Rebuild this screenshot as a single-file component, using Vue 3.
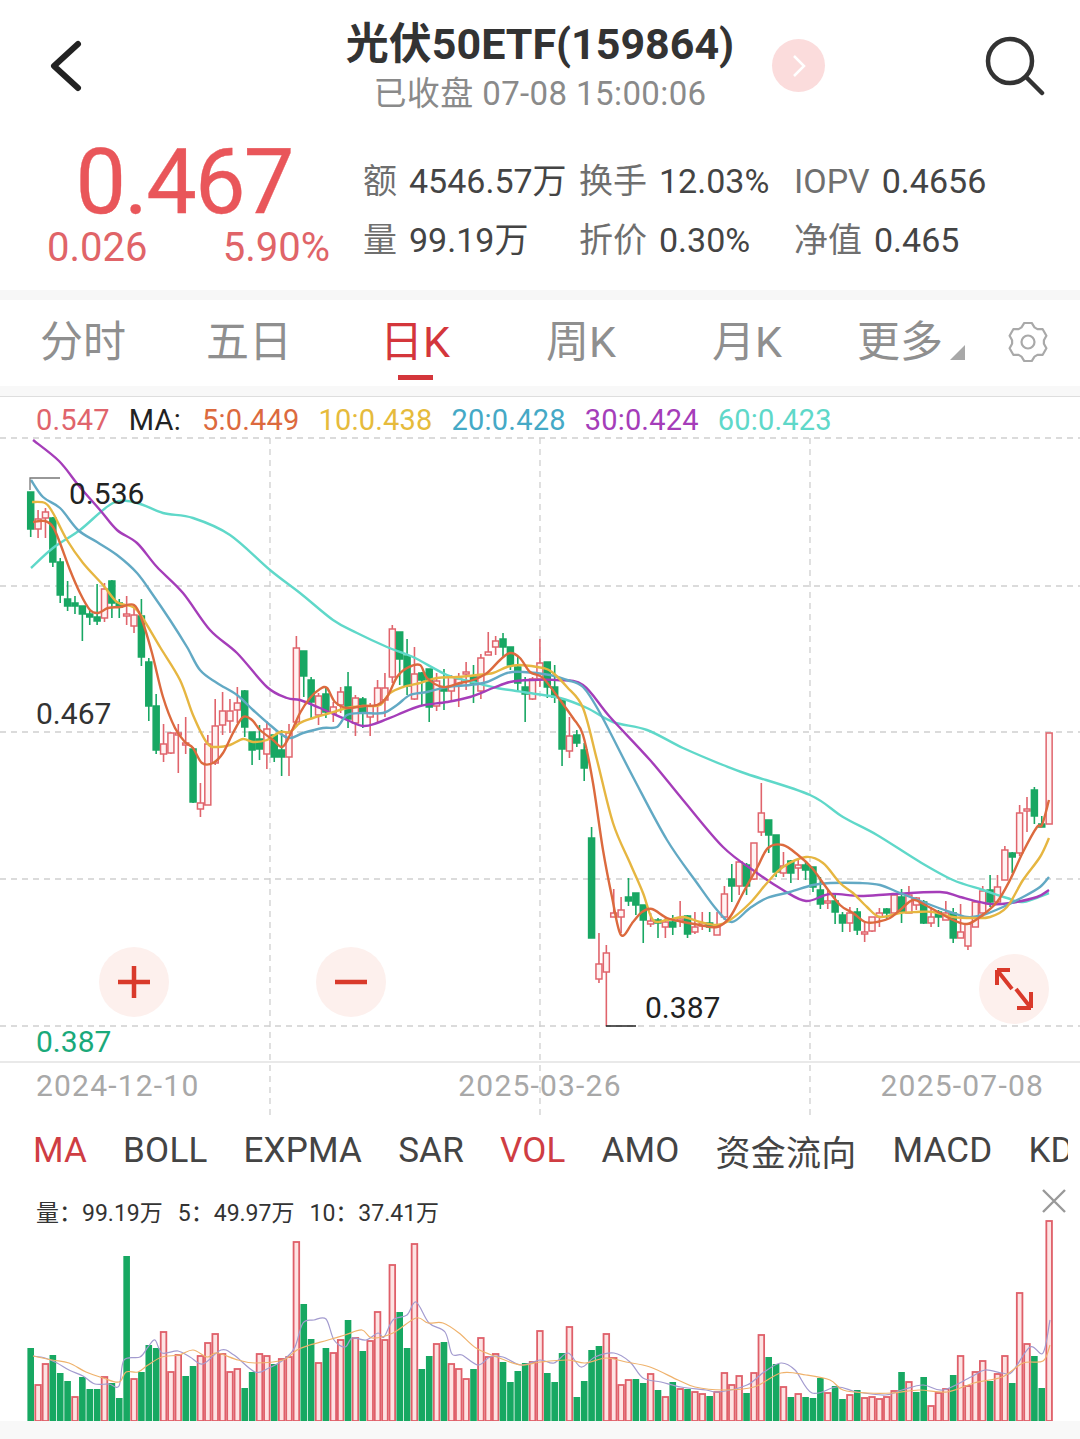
<script setup>
// 行情数据,坐标直接用页面像素:[涨跌, 最高, 实体上沿, 实体下沿, 最低]
const candleRows = [
  ['g',492,492,529,537],['r',510,519,529,538],['r',508,512,518,538],['g',517,518,562,567],['g',558,562,595,603],
  ['g',581,599,606,611],['g',596,603,606,614],['g',606,606,614,641],['g',609,614,617,625],['g',584,617,621,625],
  ['r',583,589,618,622],['g',580,581,603,618],['g',599,603,607,618],['r',596,614,615,625],['r',605,615,626,633],
  ['g',599,616,657,666],['g',658,662,706,721],['g',694,706,750,754],['r',724,744,754,762],['r',732,733,753,754],
  ['r',724,733,734,773],['r',717,743,745,754],['g',747,749,802,803],['r',783,803,809,817],['r',735,744,805,805],
  ['r',699,726,763,765],['r',692,711,725,735],['r',699,711,721,733],['r',687,703,710,723],['g',690,691,727,737],
  ['g',732,732,750,765],['g',725,739,749,760],['r',721,729,754,769],['g',735,735,757,762],['g',730,750,757,776],
  ['r',724,733,757,776],['r',636,648,722,727],['g',651,651,676,697],['g',677,680,702,718],['r',693,696,715,725],
  ['g',688,694,712,718],['r',702,707,713,722],['r',687,692,705,713],['g',672,687,719,728],['r',695,698,723,736],
  ['g',697,699,713,728],['r',703,706,717,736],['r',680,688,705,722],['r',673,688,700,717],['r',625,629,677,683],
  ['g',632,632,659,685],['g',639,656,686,695],['r',647,674,699,700],['g',672,673,680,705],['g',669,669,707,722],
  ['r',673,681,706,711],['g',669,687,691,710],['r',675,677,691,702],['r',673,679,684,707],['r',662,672,673,690],
  ['g',665,677,683,703],['r',654,658,691,699],['r',632,652,655,655],['r',636,641,647,655],['g',633,639,647,657],
  ['g',647,647,665,670],['g',657,667,683,692],['g',677,687,694,722],['r',677,679,699,700],['r',639,663,679,687],
  ['g',662,662,687,698],['g',665,687,697,703],['g',698,700,749,766],['r',717,736,751,758],['g',730,735,743,747],
  ['g',743,750,768,781],['g',827,838,938,938],['r',933,964,979,983],['r',945,953,972,1026],['r',889,913,917,917],
  ['r',897,910,917,933],['g',878,897,901,906],['g',893,893,905,915],['g',905,905,920,943],['r',913,921,924,927],
  ['g',918,920,923,938],['r',917,922,927,938],['g',915,922,927,935],['r',901,919,921,927],['g',915,916,934,938],
  ['r',912,927,932,934],['r',912,923,926,930],['g',912,923,927,932],['r',912,927,935,935],['r',886,894,917,920],
  ['g',864,879,886,902],['r',861,862,886,895],['g',863,865,886,895],['r',843,843,879,880],['r',783,813,832,836],
  ['g',820,820,835,853],['g',835,835,872,877],['r',852,866,873,877],['g',860,861,873,883],['r',860,865,868,880],
  ['g',862,865,870,880],['g',867,867,887,892],['g',877,890,904,909],['r',890,901,903,909],['g',893,901,912,924],
  ['g',912,915,923,932],['r',907,913,923,932],['g',908,912,930,935],['r',922,932,933,942],['r',917,917,931,932],
  ['r',908,913,917,927],['g',908,909,913,920],['r',893,895,913,915],['g',889,897,912,923],['r',886,895,913,913],
  ['r',897,898,905,910],['g',900,902,923,924],['r',907,917,923,927],['g',910,912,917,927],['r',901,913,920,920],
  ['g',908,913,938,943],['r',904,932,938,938],['r',923,924,946,950],['r',900,902,927,927],['r',886,891,913,917],
  ['g',875,890,902,907],['r',875,887,902,903],['r',846,850,880,880],['g',852,853,857,873],['r',805,813,853,856],
  ['r',797,809,811,832],['g',787,790,816,824],['g',816,824,827,827],['r',733,733,824,824]
]

// 成交量柱顶部 y,负数为绿柱
const volumeTops = [
  -1348,1385,1364,-1355,-1373,-1381,1397,-1377,-1389,-1389,1377,-1383,-1398,-1256,1379,-1372,-1345,-1348,1332,1372,
  1355,-1376,-1366,1356,1343,1334,1354,1372,1369,-1388,-1372,1354,1356,-1364,1359,1357,1242,-1304,-1339,1363,
  -1348,1353,1340,-1320,1338,-1351,1341,1312,1340,1265,-1312,-1348,1244,-1369,-1356,1344,-1342,1364,1369,1379,
  -1369,1338,1357,1354,-1362,-1382,-1371,-1363,1362,1331,-1373,-1382,-1353,1327,-1397,-1381,-1350,-1346,1334,1358,
  1385,1380,-1379,-1383,1374,-1390,1397,-1382,1389,-1389,1392,1394,-1396,1392,1373,1385,1376,-1393,1373,1335,
  -1357,-1364,1387,-1397,1394,-1397,-1398,-1378,1393,-1386,-1399,1395,-1390,1398,1397,1399,1397,1391,-1372,1382,
  -1392,-1377,1406,1393,1389,-1375,1356,1386,1372,1361,-1381,1374,1356,-1383,1293,1344,-1356,-1388,1221
]

const stepX = 7.38
const barX = (i) => 30.7 + stepX * i

const candles = candleRows.map(([kind, high, top, bottom, low], i) => ({
  kind, high, top, bottom, low, x: barX(i)
}))

const volumes = volumeTops.map((v, i) => ({
  kind: v < 0 ? 'g' : 'r',
  y: Math.abs(v),
  h: 1421 - Math.abs(v),
  x: barX(i)
}))

// 把折线点转成平滑曲线
const smooth = (pts) => {
  let d = `M${pts[0][0]} ${pts[0][1]}`
  for (let i = 0; i < pts.length - 1; i++) {
    const p0 = pts[i - 1] || pts[i]
    const p1 = pts[i]
    const p2 = pts[i + 1]
    const p3 = pts[i + 2] || p2
    const c1x = p1[0] + (p2[0] - p0[0]) / 6
    const c1y = p1[1] + (p2[1] - p0[1]) / 6
    const c2x = p2[0] - (p3[0] - p1[0]) / 6
    const c2y = p2[1] - (p3[1] - p1[1]) / 6
    d += ` C${c1x.toFixed(1)} ${c1y.toFixed(1)} ${c2x.toFixed(1)} ${c2y.toFixed(1)} ${p2[0]} ${p2[1]}`
  }
  return d
}

const maLines = [
  { color: '#5fd8c9', pts: [[31,568],[53,548],[80,530],[113,503],[137,503],[163,513],[193,518],[230,535],[270,570],[300,593],[333,620],[357,633],[387,647],[413,657],[447,675],[473,682],[497,688],[530,693],[560,698],[587,708],[613,722],[647,730],[683,748],[723,765],[747,774],[810,795],[843,817],[877,835],[920,862],[953,880],[983,890],[1007,898],[1023,902],[1049,893]] },
  { color: '#a53db9', pts: [[33,440],[59,461],[79,486],[100,510],[117,530],[137,543],[157,567],[183,593],[210,630],[237,653],[267,687],[287,698],[300,700],[320,708],[347,720],[363,726],[377,723],[397,715],[420,706],[447,702],[470,697],[493,688],[510,682],[530,680],[557,680],[583,685],[610,717],[650,760],[683,800],[723,847],[757,873],[783,890],[806,901],[830,894],[860,896],[893,894],[940,892],[960,897],[990,904],[1010,903],[1037,897],[1049,890]] },
  { color: '#62a9c4', pts: [[31,480],[43,497],[60,508],[78,530],[97,542],[117,555],[137,573],[153,595],[170,620],[187,647],[200,670],[217,683],[237,695],[253,710],[270,725],[288,738],[303,733],[323,728],[337,727],[347,715],[363,713],[383,713],[397,705],[410,695],[427,692],[447,687],[470,685],[487,682],[507,673],[523,672],[550,675],[567,680],[583,687],[600,713],[633,777],[667,840],[697,883],[717,910],[732,922],[750,908],[767,898],[790,892],[813,885],[830,883],[860,883],[880,885],[900,893],[923,902],[950,912],[967,917],[983,915],[1003,907],[1023,897],[1040,887],[1049,877]] },
  { color: '#e6b641', pts: [[32,502],[45,503],[53,513],[67,540],[83,563],[103,585],[117,602],[133,607],[142,617],[160,647],[180,680],[193,715],[207,743],[217,747],[230,745],[243,739],[253,742],[267,740],[280,732],[290,732],[300,723],[313,718],[330,713],[347,708],[363,706],[380,705],[390,693],[403,687],[420,683],[437,678],[457,677],[477,675],[493,673],[507,667],[520,665],[543,668],[552,672],[567,687],[583,708],[597,760],[613,823],[630,863],[643,893],[653,920],[667,920],[683,917],[700,922],[717,925],[730,920],[750,903],[767,883],[783,867],[806,857],[823,863],[840,883],[853,893],[867,907],[880,917],[900,913],[917,912],[933,912],[953,917],[973,918],[990,917],[1007,907],[1023,880],[1040,857],[1049,838]] },
  { color: '#dc6a3e', pts: [[33,522],[45,521],[53,527],[60,543],[70,570],[80,593],[90,610],[98,613],[108,608],[120,607],[134,605],[142,620],[152,653],[163,697],[175,728],[185,742],[193,748],[202,763],[213,763],[223,753],[233,733],[243,717],[252,720],[260,730],[273,740],[282,747],[289,737],[300,713],[310,698],[320,689],[327,688],[335,702],[347,708],[363,706],[377,705],[387,697],[397,677],[407,668],[420,665],[427,678],[443,687],[460,683],[473,680],[487,673],[500,660],[510,653],[520,658],[530,672],[543,678],[560,700],[573,718],[583,735],[593,783],[603,850],[612,897],[621,935],[633,922],[642,912],[652,909],[667,918],[683,922],[700,925],[717,927],[730,917],[743,893],[757,868],[768,848],[783,845],[798,855],[812,868],[823,883],[840,905],[853,913],[865,922],[877,922],[890,918],[900,910],[913,900],[925,905],[940,913],[953,920],[967,924],[980,917],[997,902],[1010,880],[1023,852],[1037,827],[1042,825],[1049,800]] }
].map((line) => ({ color: line.color, d: smooth(line.pts) }))

const volumeLines = [
  { color: '#a39bcf', d: smooth([[33,1356],[45,1358],[57,1363],[69,1370],[83,1376],[95,1384],[109,1384],[119,1386],[124,1360],[140,1357],[148,1347],[155,1340],[162,1353],[178,1351],[190,1357],[203,1364],[221,1350],[234,1355],[255,1372],[269,1368],[286,1358],[295,1347],[303,1323],[314,1320],[326,1319],[334,1340],[345,1347],[352,1338],[366,1340],[378,1333],[384,1337],[393,1320],[407,1315],[416,1302],[429,1323],[445,1332],[452,1354],[462,1355],[478,1365],[490,1357],[503,1357],[521,1365],[540,1360],[554,1363],[568,1353],[581,1367],[595,1357],[614,1353],[630,1362],[643,1378],[661,1382],[681,1387],[706,1390],[719,1392],[747,1385],[764,1372],[781,1363],[795,1370],[812,1393],[837,1387],[857,1392],[885,1395],[902,1390],[923,1385],[943,1390],[971,1377],[985,1370],[1002,1373],[1012,1372],[1030,1347],[1043,1353],[1050,1320]]) },
  { color: '#efb26c', d: smooth([[33,1356],[52,1360],[69,1363],[86,1372],[103,1378],[119,1382],[126,1372],[138,1372],[148,1365],[162,1357],[179,1355],[193,1350],[207,1357],[217,1353],[238,1360],[255,1363],[283,1360],[297,1350],[310,1345],[328,1340],[345,1335],[362,1330],[372,1338],[393,1333],[416,1318],[428,1323],[443,1323],[459,1333],[476,1348],[497,1357],[521,1365],[540,1362],[568,1360],[585,1363],[606,1358],[626,1362],[650,1367],[678,1380],[695,1387],[723,1390],[754,1387],[781,1373],[806,1375],[830,1380],[843,1390],[868,1393],[892,1393],[919,1390],[947,1392],[974,1383],[1002,1377],[1023,1363],[1043,1361],[1050,1345]]) }
]

// 六齿设置图标
const gearPath = (() => {
  const pts = []
  for (let k = 0; k < 6; k++) {
    const a = (k * 60 - 90) * Math.PI / 180
    for (const [off, r] of [[-24, 16], [-11, 19.5], [11, 19.5], [24, 16]]) {
      const t = a + off * Math.PI / 180
      pts.push(`${(20 + r * Math.cos(t)).toFixed(1)},${(20 + r * Math.sin(t)).toFixed(1)}`)
    }
  }
  return pts.join(' ')
})()

const stats = [
  ['额', '4546.57万'], ['换手', '12.03%'], ['IOPV', '0.4656'],
  ['量', '99.19万'], ['折价', '0.30%'], ['净值', '0.465']
]
const periods = ['分时', '五日', '日K', '周K', '月K', '更多']
const maLegend = [
  { text: '5:0.449', color: '#dc6a3e' },
  { text: '10:0.438', color: '#e6bb3c' },
  { text: '20:0.428', color: '#45a9c6' },
  { text: '30:0.424', color: '#a53db9' },
  { text: '60:0.423', color: '#5fd8c9' }
]
const indicators = ['MA', 'BOLL', 'EXPMA', 'SAR', 'VOL', 'AMO', '资金流向', 'MACD', 'KDJ']
const activeIndicators = ['MA', 'VOL']
// 全角冒号
const volumeLegend = ['量\uFF1A99.19万', '5\uFF1A49.97万', '10\uFF1A37.41万']
</script>

<template>
  <div class="page">
    <header class="top-bar">
      <svg class="back-icon" width="36" height="54" viewBox="0 0 36 54">
        <polyline points="31,5 7,27 31,49" />
      </svg>
      <div class="title-box">
        <div class="title">光伏50ETF(159864)</div>
        <div class="status">已收盘 07-08 15:00:06</div>
      </div>
      <div class="top-right">
        <div class="next-btn">
          <svg width="16" height="26" viewBox="0 0 16 26"><polyline points="3,3 13,13 3,23" /></svg>
        </div>
        <svg class="search-icon" width="62" height="62" viewBox="0 0 62 62">
          <circle cx="27" cy="26" r="22" />
          <line x1="43" y1="42" x2="59" y2="58" />
        </svg>
      </div>
    </header>

    <section class="quote">
      <div class="price-box">
        <div class="price">0.467</div>
        <div class="change">
          <span>0.026</span>
          <span>5.90%</span>
        </div>
      </div>
      <div class="stats">
        <div v-for="item in stats" :key="item[0]" class="stat">
          <span class="stat-label">{{ item[0] }}</span>
          <span class="stat-value">{{ item[1] }}</span>
        </div>
      </div>
    </section>

    <div class="band"></div>

    <nav class="periods">
      <div
        v-for="name in periods"
        :key="name"
        class="period"
        :class="{ active: name === '日K', more: name === '更多' }"
      >
        {{ name }}
      </div>
      <svg class="gear" width="40" height="40" viewBox="0 0 40 40">
        <polygon :points="gearPath" />
        <circle cx="20" cy="20" r="6.5" />
      </svg>
    </nav>

    <div class="band band-low"></div>

    <section class="chart">
      <svg class="chart-svg" width="1080" height="719" viewBox="0 396 1080 719">
        <g class="grid">
          <line x1="0" y1="438" x2="1080" y2="438" />
          <line x1="0" y1="586" x2="1080" y2="586" />
          <line x1="0" y1="732" x2="1080" y2="732" />
          <line x1="0" y1="879" x2="1080" y2="879" />
          <line x1="0" y1="1026" x2="1080" y2="1026" />
          <line x1="270" y1="438" x2="270" y2="1115" />
          <line x1="540" y1="438" x2="540" y2="1115" />
          <line x1="810" y1="438" x2="810" y2="1115" />
        </g>
        <g v-for="(c, i) in candles" :key="i" :class="c.kind === 'g' ? 'down' : 'up'">
          <line class="wick" :x1="c.x" :x2="c.x" :y1="c.high" :y2="c.low" />
          <rect class="body" :x="c.x - 3" :y="c.top" width="6" :height="Math.max(c.bottom - c.top, 2)" />
        </g>
        <path v-for="line in maLines" :key="line.color" class="ma" :d="line.d" :stroke="line.color" />
        <polyline class="mark" points="30,490 30,478 60,478" />
        <line class="mark-dark" x1="606" y1="1026" x2="636" y2="1026" />
        <text class="label" x="69" y="504">0.536</text>
        <text class="label dim" x="36" y="724">0.467</text>
        <text class="label" x="645" y="1018">0.387</text>
        <text class="label low" x="36" y="1052">0.387</text>
      </svg>

      <div class="legend">
        <span class="legend-high">0.547</span>
        <span class="legend-ma">MA:</span>
        <span v-for="item in maLegend" :key="item.text" :style="{ color: item.color }">{{ item.text }}</span>
      </div>

      <div class="dates">
        <span>2024-12-10</span>
        <span>2025-03-26</span>
        <span>2025-07-08</span>
      </div>

      <button class="zoom-btn plus">
        <svg width="36" height="36" viewBox="0 0 36 36"><path d="M2 18h32M18 2v32" /></svg>
      </button>
      <button class="zoom-btn minus">
        <svg width="36" height="36" viewBox="0 0 36 36"><path d="M2 18h32" /></svg>
      </button>
      <button class="zoom-btn expand">
        <svg width="38" height="42" viewBox="0 0 38 42">
          <path d="M2 2h13M2 2v15M2 2l15 19M36 40H22M36 40V24M36 40L21 21" />
        </svg>
      </button>
    </section>

    <nav class="indicators">
      <span
        v-for="name in indicators"
        :key="name"
        :class="{ on: activeIndicators.includes(name) }"
      >{{ name }}</span>
    </nav>

    <section class="volume">
      <div class="volume-legend">
        <span v-for="text in volumeLegend" :key="text">{{ text }}</span>
      </div>
      <svg class="close-icon" width="26" height="26" viewBox="0 0 26 26">
        <path d="M2 2l22 22M24 2L2 24" />
      </svg>
      <svg class="volume-svg" width="1080" height="231" viewBox="0 1190 1080 231">
        <rect
          v-for="(v, i) in volumes"
          :key="i"
          :class="v.kind === 'g' ? 'bar-down' : 'bar-up'"
          :x="v.kind === 'g' ? v.x - 3.3 : v.x - 2.8"
          :y="v.y"
          :width="v.kind === 'g' ? 6.6 : 5.6"
          :height="v.h"
        />
        <path v-for="line in volumeLines" :key="line.color" class="vol-ma" :d="line.d" :stroke="line.color" />
      </svg>
    </section>

    <div class="foot"></div>
  </div>
</template>

<style scoped>
.page {
  width: 1080px;
  height: 1439px;
  overflow: hidden;
  background: #fff;
  font-family: Roboto, "Noto Sans CJK SC", sans-serif;
  color: #333;
}

/* 顶部栏 */
.top-bar {
  height: 125px;
  display: grid;
  grid-template-columns: 308px 464px 308px;
  align-items: center;
}

.back-icon {
  margin-left: 47px;
  margin-top: 6px;
}

.back-icon polyline {
  fill: none;
  stroke: #222;
  stroke-width: 6;
  stroke-linecap: round;
  stroke-linejoin: round;
}

.title-box {
  text-align: center;
  margin-top: 10px;
}

.title {
  font-size: 43px;
  font-weight: 700;
  line-height: 50px;
  color: #333;
  white-space: nowrap;
}

.status {
  font-size: 33px;
  line-height: 44px;
  margin-top: 3px;
  color: #8a8a8a;
  white-space: nowrap;
  letter-spacing: 0.4px;
}

.top-right {
  display: flex;
  align-items: center;
  justify-content: space-between;
  padding-right: 35px;
  margin-top: 6px;
}

.next-btn {
  width: 53px;
  height: 53px;
  border-radius: 50%;
  background: #fbdcdc;
  display: flex;
  align-items: center;
  justify-content: center;
}

.next-btn polyline {
  fill: none;
  stroke: #fff;
  stroke-width: 2.5;
}

.search-icon circle,
.search-icon line {
  fill: none;
  stroke: #333;
  stroke-width: 4.5;
  stroke-linecap: round;
}

/* 报价 */
.quote {
  height: 165px;
  display: flex;
  padding-left: 47px;
}

.price-box {
  width: 316px;
}

.price {
  font-size: 90px;
  line-height: 84px;
  margin-top: 16px;
  text-align: center;
  color: #e9565a;
  letter-spacing: -1.8px;
  padding-right: 42px;
  -webkit-text-stroke: 0.3px #e9565a;
}

.change {
  display: flex;
  justify-content: space-between;
  font-size: 40px;
  line-height: 46px;
  color: #e06468;
  width: 283px;
}

.stats {
  display: grid;
  grid-template-columns: 216px 215px auto;
  grid-auto-rows: 59px;
  padding-top: 27px;
}

.stat {
  font-size: 34px;
  line-height: 59px;
  white-space: nowrap;
}

.stat-label {
  color: #6f6f6f;
  margin-right: 12px;
}

.stat-value {
  color: #444;
}

.band {
  height: 10px;
  background: #f7f7f7;
}

.band-low {
  height: 10px;
  background: #f8f8f8;
}

/* 周期切换 */
.periods {
  height: 86px;
  display: flex;
  align-items: center;
  position: relative;
}

.period {
  width: 166px;
  box-sizing: border-box;
  text-align: center;
  font-size: 43px;
  line-height: 56px;
  margin-top: -2px;
  color: #8f8f8f;
  position: relative;
}

.period.active {
  color: #d4363b;
}

.period.active::after {
  content: '';
  position: absolute;
  left: 66px;
  bottom: -10px;
  width: 35px;
  height: 5px;
  background: #d4363b;
}

.period.more {
  padding-right: 26px;
}

.period.more::after {
  content: '';
  position: absolute;
  right: 31px;
  bottom: 10px;
  border-left: 15px solid transparent;
  border-bottom: 15px solid #a8a8a8;
}

.gear {
  margin-left: 12px;
  margin-top: -2px;
}

.gear polygon,
.gear circle {
  fill: none;
  stroke: #a9a9a9;
  stroke-width: 2.2;
  stroke-linejoin: round;
}

/* K 线 */
.chart {
  position: relative;
  height: 719px;
  border-top: 1px solid #dedede;
  display: flex;
  flex-direction: column;
  justify-content: space-between;
  box-sizing: border-box;
  padding-bottom: 11px;
}

.chart::after {
  content: '';
  position: absolute;
  left: 0;
  right: 0;
  top: 664px;
  height: 2px;
  background: #e9e9e9;
}

.chart-svg {
  position: absolute;
  left: 0;
  top: -1px;
}

.grid line {
  stroke: #cfcfcf;
  stroke-width: 1.3;
  stroke-dasharray: 6 5;
}

.wick {
  stroke-width: 1.6;
}

.body {
  stroke-width: 1.5;
}

.up .wick,
.up .body {
  stroke: #e0646c;
}

.up .body {
  fill: #fff3f3;
}

.down .wick,
.down .body {
  stroke: #18a763;
}

.down .body {
  fill: #18a763;
}

.ma {
  fill: none;
  stroke-width: 2.4;
}

.mark {
  fill: none;
  stroke: #777;
  stroke-width: 1.3;
}

.mark-dark {
  stroke: #222;
  stroke-width: 1.5;
}

.label {
  font-size: 30px;
  fill: #222;
}

.label.dim {
  fill: #333;
}

.label.low {
  fill: #1aa97a;
}

.legend {
  position: relative;
  display: flex;
  padding: 6px 0 0 36px;
  font-size: 29px;
  letter-spacing: 0.2px;
  line-height: 34px;
  white-space: nowrap;
  gap: 19px;
}

.legend-high {
  color: #e0646c;
}

.legend-ma {
  color: #222;
  margin-right: 2px;
}

.dates {
  position: relative;
  display: flex;
  justify-content: space-between;
  padding: 0 36px;
  font-size: 30px;
  letter-spacing: 1.2px;
  line-height: 36px;
  color: #a8a8a8;
}

.zoom-btn {
  position: absolute;
  width: 70px;
  height: 70px;
  border: none;
  border-radius: 50%;
  background: #fdf0ed;
  padding: 0;
  display: flex;
  align-items: center;
  justify-content: center;
}

.zoom-btn path {
  fill: none;
  stroke: #d93a2b;
  stroke-width: 4.5;
}

.plus {
  left: 99px;
  top: 550px;
}

.minus {
  left: 316px;
  top: 550px;
}

.expand {
  left: 979px;
  top: 557px;
}

.expand path {
  stroke-width: 4;
}

/* 指标切换 */
.indicators {
  height: 75px;
  width: 1068px;
  overflow: hidden;
  display: flex;
  align-items: center;
  gap: 36px;
  padding: 0 0 5px 33px;
  box-sizing: border-box;
  font-size: 35px;
  letter-spacing: 0.2px;
  color: #444;
  white-space: nowrap;
}

.indicators span {
  flex-shrink: 0;
}

.indicators .on {
  color: #cf3d43;
}

/* 成交量 */
.volume {
  position: relative;
  height: 231px;
}

.volume-legend {
  display: flex;
  gap: 15px;
  padding: 10px 0 0 36px;
  font-size: 23px;
  line-height: 28px;
  color: #333;
  position: relative;
  z-index: 1;
  white-space: nowrap;
}

.close-icon {
  position: absolute;
  left: 1041px;
  top: -2px;
}

.close-icon path {
  fill: none;
  stroke: #999;
  stroke-width: 2.4;
}

.volume-svg {
  position: absolute;
  left: 0;
  top: 0;
}

.bar-down {
  fill: #17a862;
}

.bar-up {
  fill: #fde3e3;
  stroke: #df5f69;
  stroke-width: 1.8;
}

.vol-ma {
  fill: none;
  stroke-width: 1.2;
}

.foot {
  height: 18px;
  background: #f8f8f8;
}
</style>
